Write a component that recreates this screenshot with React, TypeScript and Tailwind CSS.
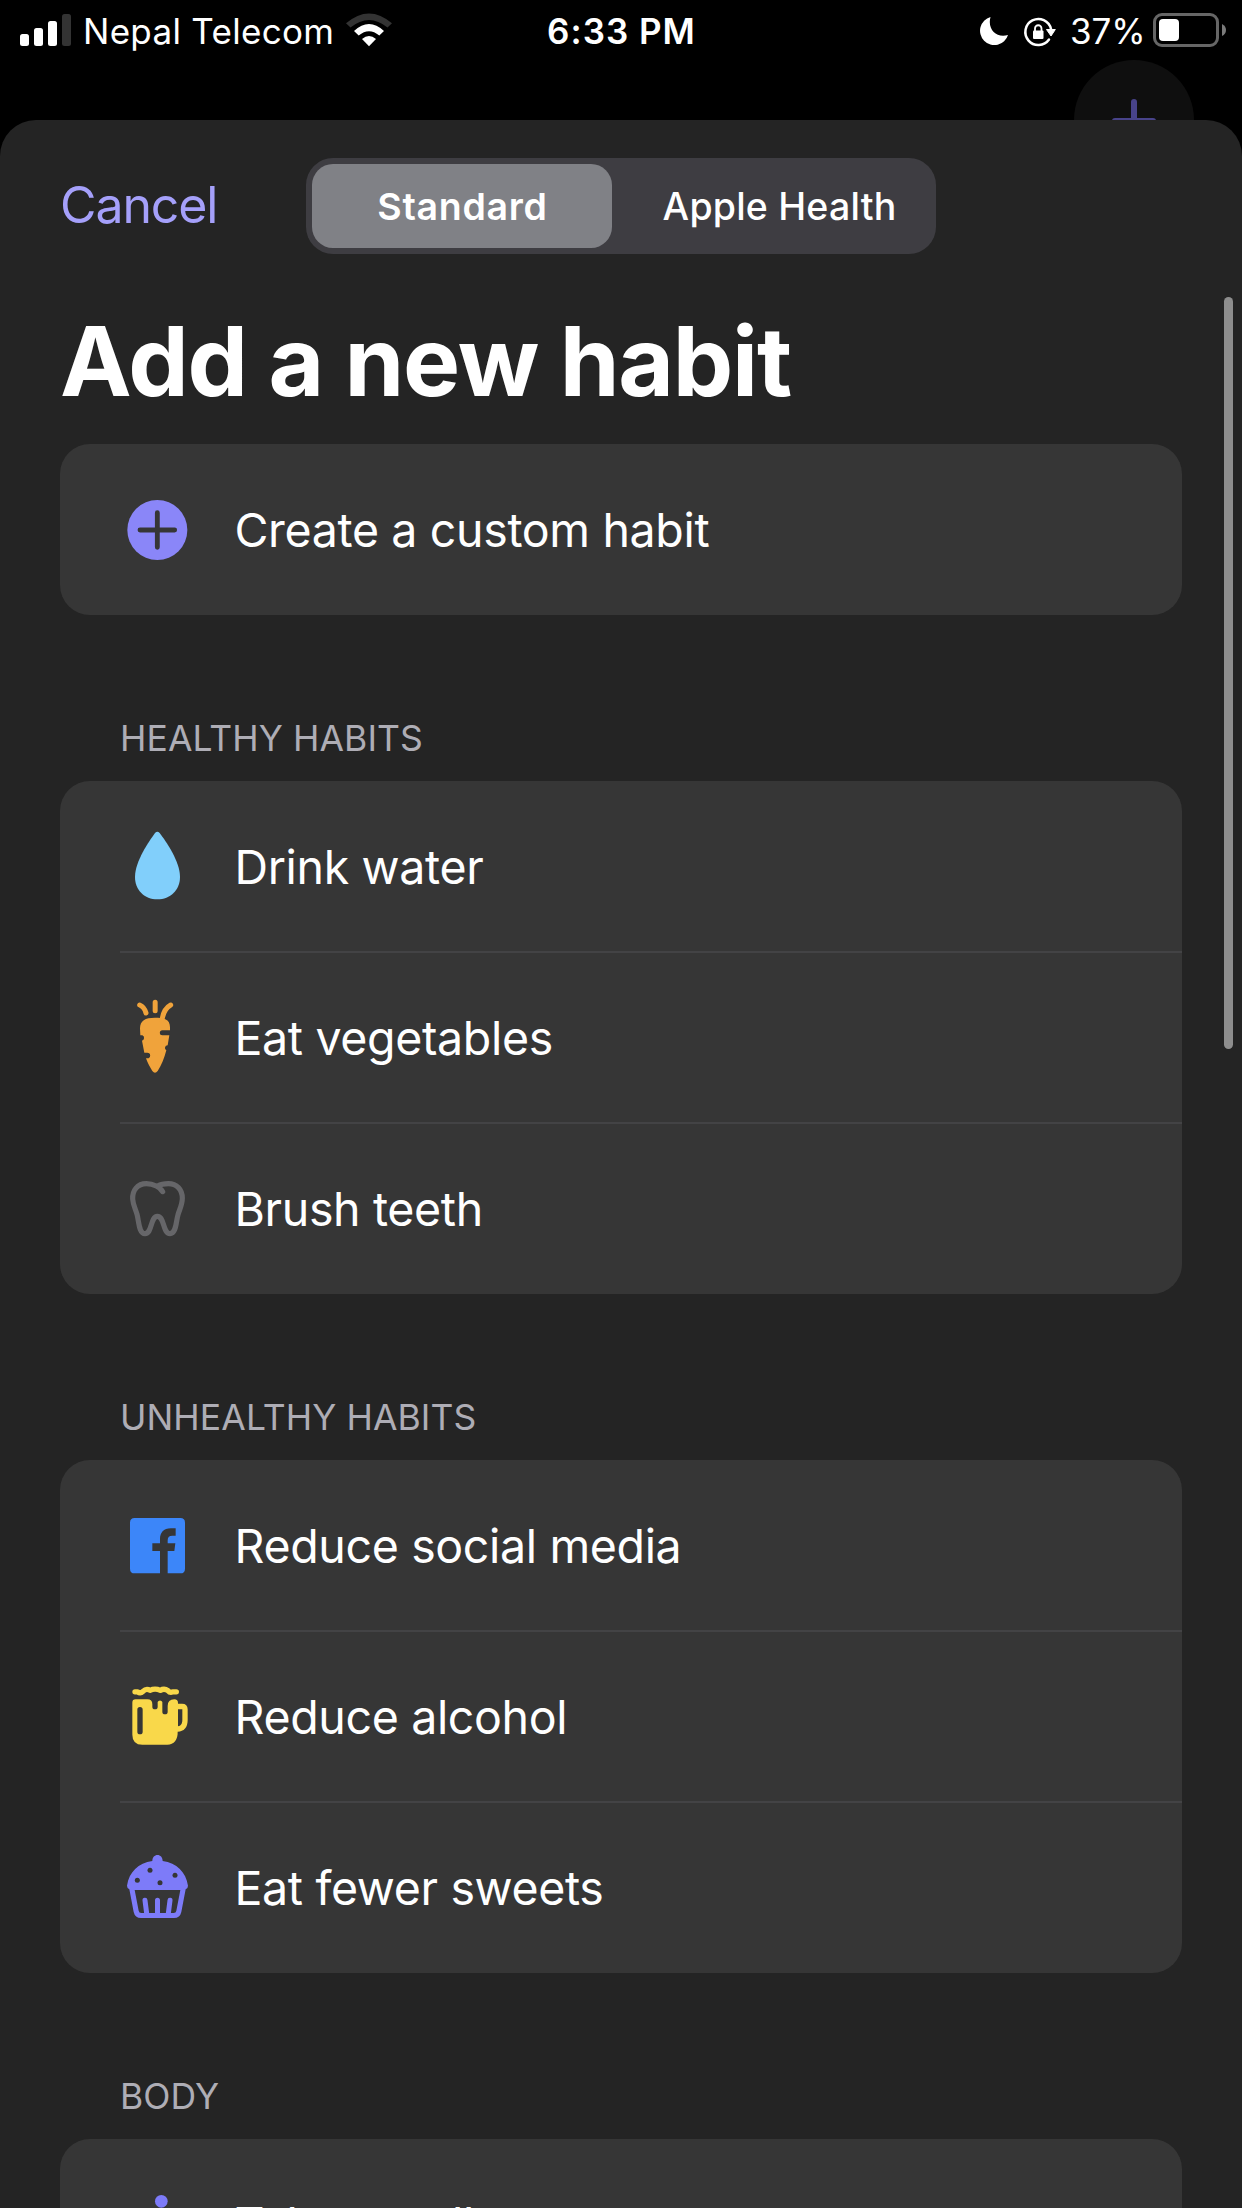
import React from "react";

type IconProps = { shift: number; children: React.ReactNode };

/** 120px icon canvas; `shift` nudges the drawing vertically inside its row. */
function IconBox({ shift, children }: IconProps) {
  return (
    <svg
      className="mt-[25px] ml-10 h-[120px] w-[120px] shrink-0"
      viewBox={`0 ${shift} 360 360`}
      fill="none"
      aria-hidden="true"
    >
      {children}
    </svg>
  );
}

const PlusIcon = () => (
  <IconBox shift={0}>
    <circle cx="172" cy="183" r="90" fill="#8a86f8" />
    <path d="M120 183H224M172 131V235" stroke="#363636" strokeWidth="14.5" strokeLinecap="round" />
  </IconBox>
);

const WaterIcon = () => (
  <IconBox shift={18}>
    <path
      d="M165 99Q172 92 179 99C198 124 240 184 240 231C240 270 211 298 172 298S105 270 105 231C105 184 147 124 165 99Z"
      fill="#81cffb"
    />
  </IconBox>
);

const CarrotIcon = () => (
  <IconBox shift={-9}>
    <path
      d="M165 113C178 113 189 115 196 118C206 122 210 131 210 142V151H187A7.500 7.500 0 0 0 187 166H208L203 196A8 8 0 0 0 199 211C193 235 184 256 173 273Q165 284 157 273C150 262 143 249 138 235H142A8.500 8.500 0 0 0 142 218H133L126 182A8.500 8.500 0 0 0 127 166H121L120 145C120 122 135 113 165 113Z"
      fill="#f0a33b"
    />
    <path
      d="M119 75C129 79 135 88 138 99M165.500 67V92M212 75C199 82 189 99 186 120"
      stroke="#f0a33b"
      strokeWidth="15"
      strokeLinecap="round"
    />
  </IconBox>
);

const ToothIcon = () => (
  <IconBox shift={-6}>
    <path
      d="M188 125C181 112 160 101 139 101C112 101 97 121 98 147C99 164 106 176 111 193C117 213 116 251 135 251C157 251 151 199 172 199C194 199 188 251 210 251C229 251 228 214 234 194C239 177 247 164 247 145C247 118 230 101 205 101C192 101 182 103 173 108"
      stroke="#666669"
      strokeWidth="15.5"
      strokeLinecap="round"
      strokeLinejoin="round"
    />
  </IconBox>
);

const SocialIcon = () => (
  <IconBox shift={-15}>
    <path
      d="M104 84H241Q255 84 255 98V236Q255 250 241 250H203V183H223L226 160H203V151C203 141 208 137 217 137H227V115H213C190 115 180 129 180 147V160H157V183H180V250H104Q90 250 90 236V98Q90 84 104 84Z"
      fill="#3c86f9"
    />
  </IconBox>
);

const BeerIcon = () => (
  <IconBox shift={-12}>
    <path
      fillRule="evenodd"
      d="M107 118H142Q157 118 157 133V140A8 8 0 0 0 173 140V126A7.500 7.500 0 0 1 187 126V155A8 8 0 0 0 203 155V138Q203 118 223 118Q234 118 234 129V131H246Q263 131 263 148V180C263 202 252 215 233 215C234 238 222 254 202 254H127Q97 254 97 224V128Q97 118 107 118ZM120 141Q112 141 112 149V215A8 8 0 0 0 128 215V149Q128 141 120 141ZM234 148V199C243 198 247 190 247 180V148Z"
      fill="#f9d84a"
    />
    <path
      d="M105 95.500H113Q121 102 129 94Q139 84 150 91Q165 84 181 91Q193 84 204 92Q210 99 218 95.500H229"
      stroke="#f9d84a"
      strokeWidth="16"
      strokeLinecap="round"
      strokeLinejoin="round"
    />
  </IconBox>
);

const CupcakeIcon = () => (
  <IconBox shift={-9}>
    <path
      fillRule="evenodd"
      d="M157 93C157 82 164 75 172.500 75S188 82 188 93C230 99 258 126 264 167Q264 175 257 178L244 246Q240 264 222 264H123Q105 264 101 246L88 178Q81 175 81 167C87 126 115 99 157 93ZM104 180L116 242Q117 249 124 249H221Q228 249 229 242L241 180Z"
      fill="#7d7bf9"
    />
    <path d="M135 211L140 250M172.500 211V250M210 211L205 250" stroke="#7d7bf9" strokeWidth="15" strokeLinecap="round" />
    <g fill="#363636">
      <circle cx="150" cy="121" r="7.500" />
      <circle cx="225" cy="136" r="7.500" />
      <circle cx="112" cy="151" r="7.500" />
      <circle cx="180" cy="158" r="7.500" />
    </g>
  </IconBox>
);

const WalkIcon = () => (
  <IconBox shift={0}>
    <circle cx="184" cy="112" r="19" fill="#7d7bf9" />
    <path
      d="M178 145L166 210L200 245L210 295M166 210L150 260L125 295M178 150L140 175V210M180 155L200 190L230 200"
      stroke="#7d7bf9"
      strokeWidth="16"
      strokeLinecap="round"
      strokeLinejoin="round"
    />
  </IconBox>
);

type Habit = { label: string; Icon: () => React.ReactElement };

function HabitCard({ habits, leading = "leading-[172px]" }: { habits: Habit[]; leading?: string }) {
  return (
    <div className="mx-[60px] overflow-hidden rounded-[30px] bg-[#363636]">
      {habits.map(({ label, Icon }, i) => (
        <div key={label} className="relative flex h-[171px]">
          {i > 0 && <div className="absolute -top-px right-0 left-[60px] h-[2px] bg-[#434345]" />}
          <Icon />
          <span
            className={`ml-[14.5px] text-[46.5px] tracking-[-0.35px] whitespace-nowrap text-white ${leading}`}
          >
            {label}
          </span>
        </div>
      ))}
    </div>
  );
}

function SectionTitle({ children }: { children: string }) {
  return (
    <h2 className="h-[166px] pt-[81px] pl-[120px] text-[35.5px] leading-[86px] tracking-[0.1px] text-[#aeadb5]">
      {children}
    </h2>
  );
}

function StatusBar() {
  return (
    <div className="grid h-[60px] grid-cols-3 text-[35px] leading-[62px] whitespace-nowrap text-white">
      <div className="flex">
        <svg className="ml-5 h-[60px] w-[52px]" viewBox="20 0 52 60" fill="#fff">
          <rect x="20" y="34" width="9" height="12" rx="2.500" />
          <rect x="34" y="28" width="9" height="18" rx="2.500" />
          <rect x="48" y="21" width="9" height="25" rx="2.500" />
          <rect x="62" y="14" width="9" height="32" rx="2.500" fill="#333" />
        </svg>
        <span className="ml-[11px] tracking-[0.3px]">Nepal Telecom</span>
        <svg className="ml-[10px] h-[60px] w-[50px]" viewBox="344 0 50 60">
          <path d="M346 23.300Q369 3.500 392 23.300L387.500 27.600Q369 12.500 350.500 27.600Z" fill="#333" />
          <path d="M354 31Q369 17 384 31L379.300 35.600Q369 27 358.700 35.600Z" fill="#fff" />
          <path d="M362 39Q369 33 376 39L369 46.200Z" fill="#fff" />
        </svg>
      </div>
      <div className="pl-px text-center font-semibold tracking-[1px]">6:33 PM</div>
      <div className="flex justify-end">
        <svg className="h-[60px] w-[76px]" viewBox="980 0 76 60">
          <path d="M990.500 17A14.300 14.300 0 1 0 1008 35C997 38.500 987 30 990.500 17Z" fill="#fff" />
          <path d="M1049 39.500A13 13 0 1 1 1051 29" stroke="#fff" strokeWidth="2.500" fill="none" strokeLinecap="round" />
          <path d="M1046.500 29.500H1055.300L1051 36Z" fill="#fff" stroke="#fff" strokeLinejoin="round" />
          <rect x="1033" y="30.500" width="10.500" height="8.500" rx="1" fill="#fff" />
          <path d="M1035 31V28.500A3.200 3.200 0 0 1 1041.500 28.500V31" stroke="#fff" strokeWidth="1.800" fill="none" />
        </svg>
        <span className="ml-[14px] tracking-[-0.1px]">37%</span>
        <svg className="mr-[14px] ml-[6.5px] h-[60px] w-[76px]" viewBox="1152 0 76 60">
          <rect x="1154.500" y="14.500" width="63" height="31" rx="7.500" stroke="#666" strokeWidth="3" fill="none" />
          <rect x="1159" y="19" width="20" height="22" rx="4" fill="#fff" />
          <path d="M1222 24Q1226 26 1226 30T1222 36Z" fill="#7a7a7a" />
        </svg>
      </div>
    </div>
  );
}

export default function App() {
  return (
    <div className="h-[2208px] w-[1242px] overflow-hidden bg-black font-['Inter',sans-serif]">
      <StatusBar />
      {/* Floating add button, mostly hidden behind the sheet */}
      <div className="-mb-9 flex h-24 justify-end overflow-hidden pr-12">
        <svg className="h-[120px] w-[120px]" viewBox="0 0 120 120">
          <circle cx="60" cy="60" r="60" fill="#0f0f0f" />
          <path d="M60 42V80M41 61H79" stroke="#48438a" strokeWidth="6" strokeLinecap="round" />
        </svg>
      </div>

      <div className="relative h-[2088px] overflow-hidden rounded-t-[36px] bg-[#242424]">
        <div className="grid h-[172px] grid-cols-[306px_630px_1fr] items-center">
          <button className="pb-[2px] pl-[60px] text-left text-[50px] leading-none tracking-[-1.100px] text-[#a5a0fa]">
            Cancel
          </button>
          <div className="flex h-24 items-center rounded-[27px] bg-[#3e3d42] p-[6px] text-[37.5px] font-medium text-white">
            <div className="h-[84px] w-[300px] rounded-[21px] bg-[#808186] pl-px text-center leading-[86px] font-semibold tracking-[0.7px]">
              Standard
            </div>
            <div className="ml-[17px] h-[84px] flex-1 text-center leading-[86px] tracking-[0.2px]">Apple Health</div>
          </div>
        </div>

        <h1 className="mb-[14px] h-[138px] pl-[60px] text-[96px] leading-[138px] font-bold tracking-[-1.200px] text-white">
          Add a new habit
        </h1>

        <HabitCard habits={[{ label: "Create a custom habit", Icon: PlusIcon }]} />

        <SectionTitle>HEALTHY HABITS</SectionTitle>
        <HabitCard
          habits={[
            { label: "Drink water", Icon: WaterIcon },
            { label: "Eat vegetables", Icon: CarrotIcon },
            { label: "Brush teeth", Icon: ToothIcon },
          ]}
        />

        <SectionTitle>UNHEALTHY HABITS</SectionTitle>
        <HabitCard
          habits={[
            { label: "Reduce social media", Icon: SocialIcon },
            { label: "Reduce alcohol", Icon: BeerIcon },
            { label: "Eat fewer sweets", Icon: CupcakeIcon },
          ]}
        />

        <SectionTitle>BODY</SectionTitle>
        <HabitCard leading="leading-[170px]" habits={[{ label: "Take a walk", Icon: WalkIcon }]} />

        {/* Scroll indicator */}
        <div className="absolute top-[177px] right-[9px] h-[752px] w-[9px] rounded-full bg-[#8e8e8e]" />
      </div>
    </div>
  );
}
